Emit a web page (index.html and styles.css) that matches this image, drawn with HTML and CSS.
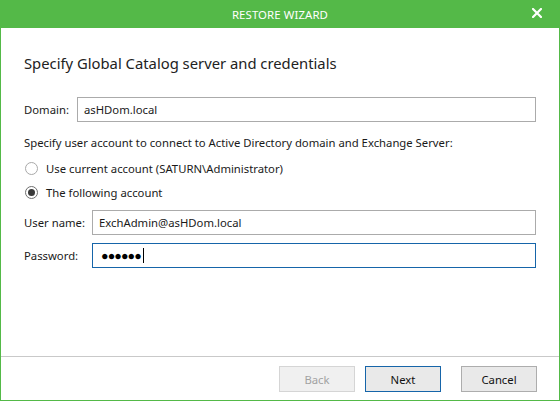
FILE: index.html
```html
<!DOCTYPE html>
<html lang="en">
<head>
<meta charset="UTF-8">
<title>Restore Wizard</title>
<link rel="stylesheet" href="styles.css">
</head>
<body>
<div class="wizard">
  <div class="titlebar">
    <span class="title">RESTORE WIZARD</span>
    <span class="close">
      <svg width="10" height="10" viewBox="0 0 10 10"><path d="M1 1L9 9M9 1L1 9" stroke="#fff" stroke-width="2.2" stroke-linecap="square"/></svg>
    </span>
  </div>

  <div class="content">
    <h1 class="heading">Specify Global Catalog server and credentials</h1>

    <div class="row domain-row">
      <label class="lbl lbl-domain">Domain:</label>
      <div class="box">asHDom.local</div>
    </div>

    <div class="desc">Specify user account to connect to Active Directory domain and Exchange Server:</div>

    <div class="radios">
      <div class="radio-row">
        <span class="radio"></span>
        <span>Use current account (SATURN\Administrator)</span>
      </div>
      <div class="radio-row">
        <span class="radio checked"></span>
        <span>The following account</span>
      </div>
    </div>

    <div class="row user-row">
      <label class="lbl lbl-wide">User name:</label>
      <div class="box">ExchAdmin@asHDom.local</div>
    </div>
    <div class="row pass-row">
      <label class="lbl lbl-wide">Password:</label>
      <div class="box focused"><span class="dots">&#9679;&#9679;&#9679;&#9679;&#9679;&#9679;</span><span class="caret"></span></div>
    </div>
  </div>

  <div class="footer">
    <button class="btn" disabled>Back</button>
    <button class="btn default">Next</button>
    <button class="btn cancel">Cancel</button>
  </div>
</div>
</body>
</html>
```

FILE: styles.css
```css
body{margin:0;background:#fff;font-family:"Noto Sans","Open Sans",sans-serif;font-size:11.3px;color:#1a1a1a}
.wizard{width:560px;height:401px;box-sizing:border-box;border:1px solid #54b948;border-top:0;display:flex;flex-direction:column}
.titlebar{height:28px;margin:0 -1px;background:#54b948;color:#fff;display:flex;align-items:center;justify-content:center;position:relative}
.title{font-size:11.4px;letter-spacing:0.1px}
.close{position:absolute;right:18px;top:8px;width:10px;height:10px;display:flex}
.content{flex:1;padding:0 23px}
.heading{margin:25px 0 0;font-size:14.8px;line-height:20px;font-weight:normal;color:#222}
.row{display:flex;align-items:center}
.domain-row{margin-top:24px}
.user-row{margin-top:6px}
.pass-row{margin-top:8px}
.lbl{flex:none}
.lbl-domain{width:53px}
.lbl-wide{width:68px}
.box{flex:1;height:25px;box-sizing:border-box;border:1px solid #ababab;padding:0 6px;display:flex;align-items:center;line-height:16px}
.box.focused{border-color:#1665a9}
.dots{margin-left:2px;font-size:12.5px;letter-spacing:-0.9px;color:#000}
.caret{width:1px;height:15px;background:#000;margin-left:2px}
.desc{margin-top:13px;line-height:16px}
.radios{margin-top:5px}
.radio-row{height:24px;display:flex;align-items:center;gap:8px}
.radio{width:13px;height:13px;box-sizing:border-box;border:1px solid #a9a9a9;border-radius:50%;margin-left:1px;display:flex;align-items:center;justify-content:center}
.radio.checked{border-color:#6f6f6f}
.radio.checked::after{content:"";width:7px;height:7px;border-radius:50%;background:#3a3a3a}
.footer{border-top:1px solid #c9c9c9;padding:9px 22px 8px 0;display:flex;justify-content:flex-end;gap:10px}
.btn{width:76px;height:26px;box-sizing:border-box;border:1px solid #adadad;background:#e9e9e9;font-family:inherit;font-size:11.3px;color:#111;padding:0}
.btn:disabled{border-color:#d5d5d5;background:#f0f0f0;color:#a2a2a2}
.btn.default{border-color:#1665a9}
.btn.cancel{margin-left:10px}
```
